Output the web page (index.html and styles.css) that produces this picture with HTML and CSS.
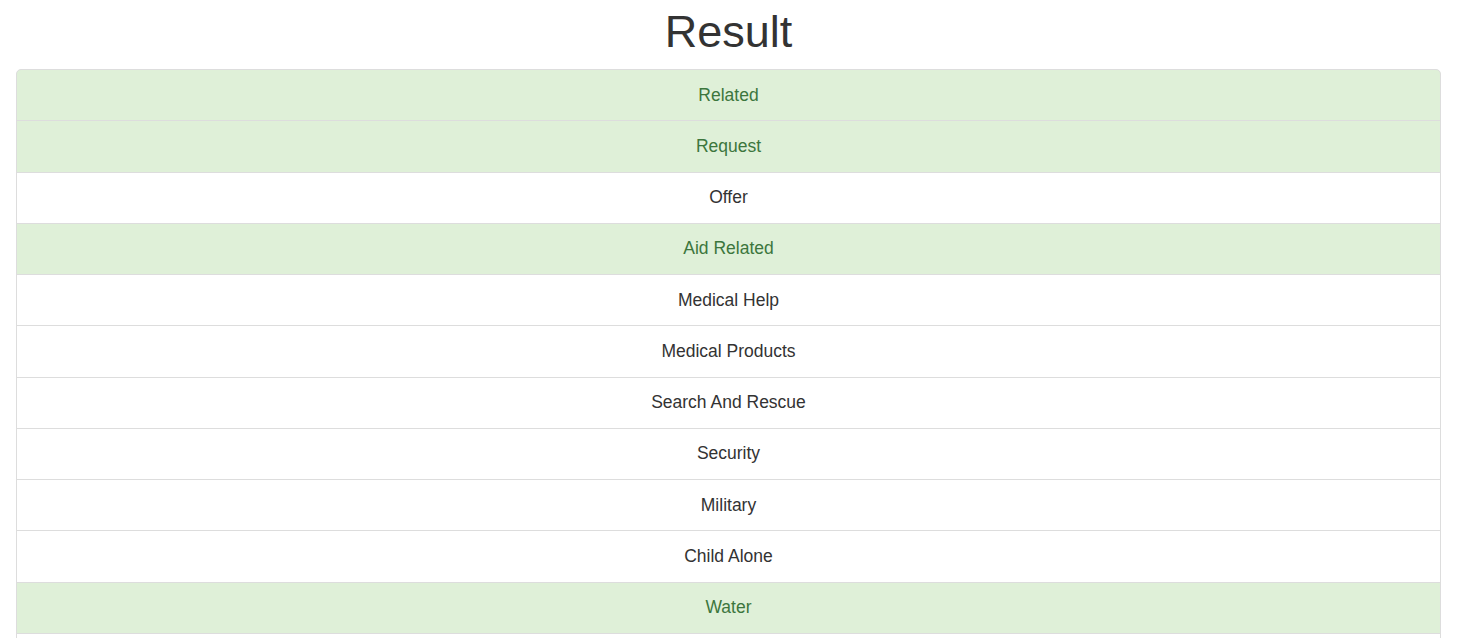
FILE: index.html
```html
<!DOCTYPE html>
<html>
<head>
<meta charset="utf-8">
<link rel="stylesheet" href="styles.css">
</head>
<body>
<div class="page">
  <h1 class="title">Result</h1>
  <ul class="list-group">
    <li class="item success">Related</li>
    <li class="item success">Request</li>
    <li class="item">Offer</li>
    <li class="item success">Aid Related</li>
    <li class="item">Medical Help</li>
    <li class="item">Medical Products</li>
    <li class="item">Search And Rescue</li>
    <li class="item">Security</li>
    <li class="item">Military</li>
    <li class="item">Child Alone</li>
    <li class="item success">Water</li>
    <li class="item item-empty"></li>
  </ul>
</div>
</body>
</html>
```

FILE: styles.css
```css
html, body {
  margin: 0;
  padding: 0;
  background: #fff;
}
body {
  font-family: "Liberation Sans", Arial, sans-serif;
  font-size: 17.5px;
  color: #333;
  overflow: hidden;
}
.page {
  padding: 7px 18px 0 16px;
}
.title {
  margin: 0 0 12.5px 0;
  font-size: 45px;
  font-weight: 500;
  line-height: 1.1;
  text-align: center;
  color: #333;
}
.list-group {
  list-style: none;
  margin: 0;
  padding: 0;
}
.item {
  display: block;
  padding: 12.5px 18.75px;
  line-height: 25.25px;
  text-align: center;
  background: #fff;
  border: 1px solid #ddd;
  margin-bottom: -1px;
}
.item-empty {
  height: 25.25px;
}
.item:first-child {
  border-top-left-radius: 5px;
  border-top-right-radius: 5px;
}
.item.success {
  background: #dff0d8;
  color: #3c763d;
}
```
